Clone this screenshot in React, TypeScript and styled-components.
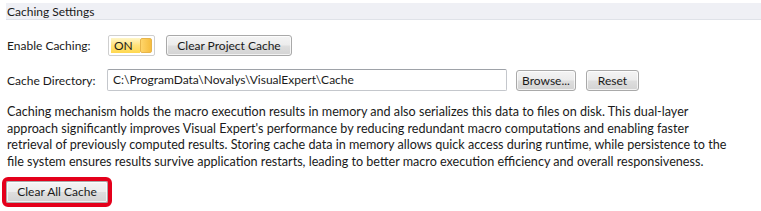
import React from 'react'
import styled, { createGlobalStyle } from 'styled-components'

const GlobalStyle = createGlobalStyle`
  html, body {
    margin: 0;
    padding: 0;
    background: #ffffff;
  }
  body {
    font-family: 'Lato', 'Liberation Sans', sans-serif;
    font-size: 12px;
    color: #1a1a1a;
  }
`

const Page = styled.div`
  width: 761px;
  height: 211px;
  padding: 3px 0 0 6px;
  box-sizing: border-box;
  overflow: hidden;
`

const SectionHeader = styled.div`
  height: 15px;
  padding: 1px 0 0 1px;
  line-height: 16px;
  background: #eff0f5;
  border-bottom: 1px solid #dfe2e8;
`

const Body = styled.div`
  padding-left: 1px;
`

const FormRow = styled.div<{ $top: number }>`
  display: flex;
  align-items: center;
  margin-top: ${p => p.$top}px;
`

const Label = styled.div`
  width: 100px;
  flex-shrink: 0;
`

const Toggle = styled.div`
  width: 47px;
  height: 21px;
  box-sizing: border-box;
  border: 1px solid #cfcfcf;
  border-radius: 2px;
  background: #ffffff;
  padding: 2px;
  display: flex;
  margin-left: 1px;
`

const ToggleOn = styled.div`
  flex: 1;
  background: linear-gradient(#fff6c8, #ffe27a 50%, #ffd84f);
  padding-left: 3px;
  line-height: 15px;
`

const ToggleThumb = styled.div`
  width: 12px;
  box-sizing: border-box;
  border: 1px solid #e7b54a;
  border-radius: 2px;
  background: linear-gradient(90deg, #ffd56a, #f6bd3e);
`

const Button = styled.button<{ $w: number; $gap?: number }>`
  width: ${p => p.$w}px;
  height: 21px;
  margin-left: ${p => p.$gap ?? 0}px;
  padding: 0;
  box-sizing: border-box;
  font-family: inherit;
  font-size: 12px;
  color: #1a1a1a;
  border: 1px solid #a9a9a9;
  border-radius: 3px;
  background: linear-gradient(#f4f4f4, #ececec 48%, #dedede 52%, #d3d3d3);
  box-shadow: inset 0 0 0 1px rgba(255, 255, 255, 0.7);
`

const HighlightButton = styled(Button)`
  height: 22px;
  margin-left: -1px;
  outline: 4px solid #e4001b;
  outline-offset: 0;
  border-radius: 2px;
`

const TextBox = styled.div`
  width: 400px;
  height: 22px;
  box-sizing: border-box;
  border: 1px solid #c4c7cc;
  border-top-color: #9ea2a8;
  border-radius: 2px;
  padding-left: 5px;
  line-height: 20px;
`

const Description = styled.p`
  margin: 13px 0 0;
  font-size: 12.6px;
  line-height: 16.7px;
  white-space: nowrap;
`

const Footer = styled.div`
  margin-top: 10px;
  display: flex;
`

const App = () => {
  return (
    <>
      <GlobalStyle />
      <Page>
        <SectionHeader>Caching Settings</SectionHeader>
        <Body>
          <FormRow $top={15}>
            <Label>Enable Caching:</Label>
            <Toggle>
              <ToggleOn>ON</ToggleOn>
              <ToggleThumb />
            </Toggle>
            <Button $w={126} $gap={11}>Clear Project Cache</Button>
          </FormRow>
          <FormRow $top={13}>
            <Label>Cache Directory:</Label>
            <TextBox>C:\ProgramData\Novalys\VisualExpert\Cache</TextBox>
            <Button $w={60} $gap={9}>Browse...</Button>
            <Button $w={53} $gap={10}>Reset</Button>
          </FormRow>
          <Description>
            Caching mechanism holds the macro execution results in memory and also serializes this data to files on disk. This dual-layer<br />
            approach significantly improves Visual Expert's performance by reducing redundant macro computations and enabling faster<br />
            retrieval of previously computed results. Storing cache data in memory allows quick access during runtime, while persistence to the<br />
            file system ensures results survive application restarts, leading to better macro execution efficiency and overall responsiveness.
          </Description>
          <Footer>
            <HighlightButton $w={102}>Clear All Cache</HighlightButton>
          </Footer>
        </Body>
      </Page>
    </>
  )
}

export default App
